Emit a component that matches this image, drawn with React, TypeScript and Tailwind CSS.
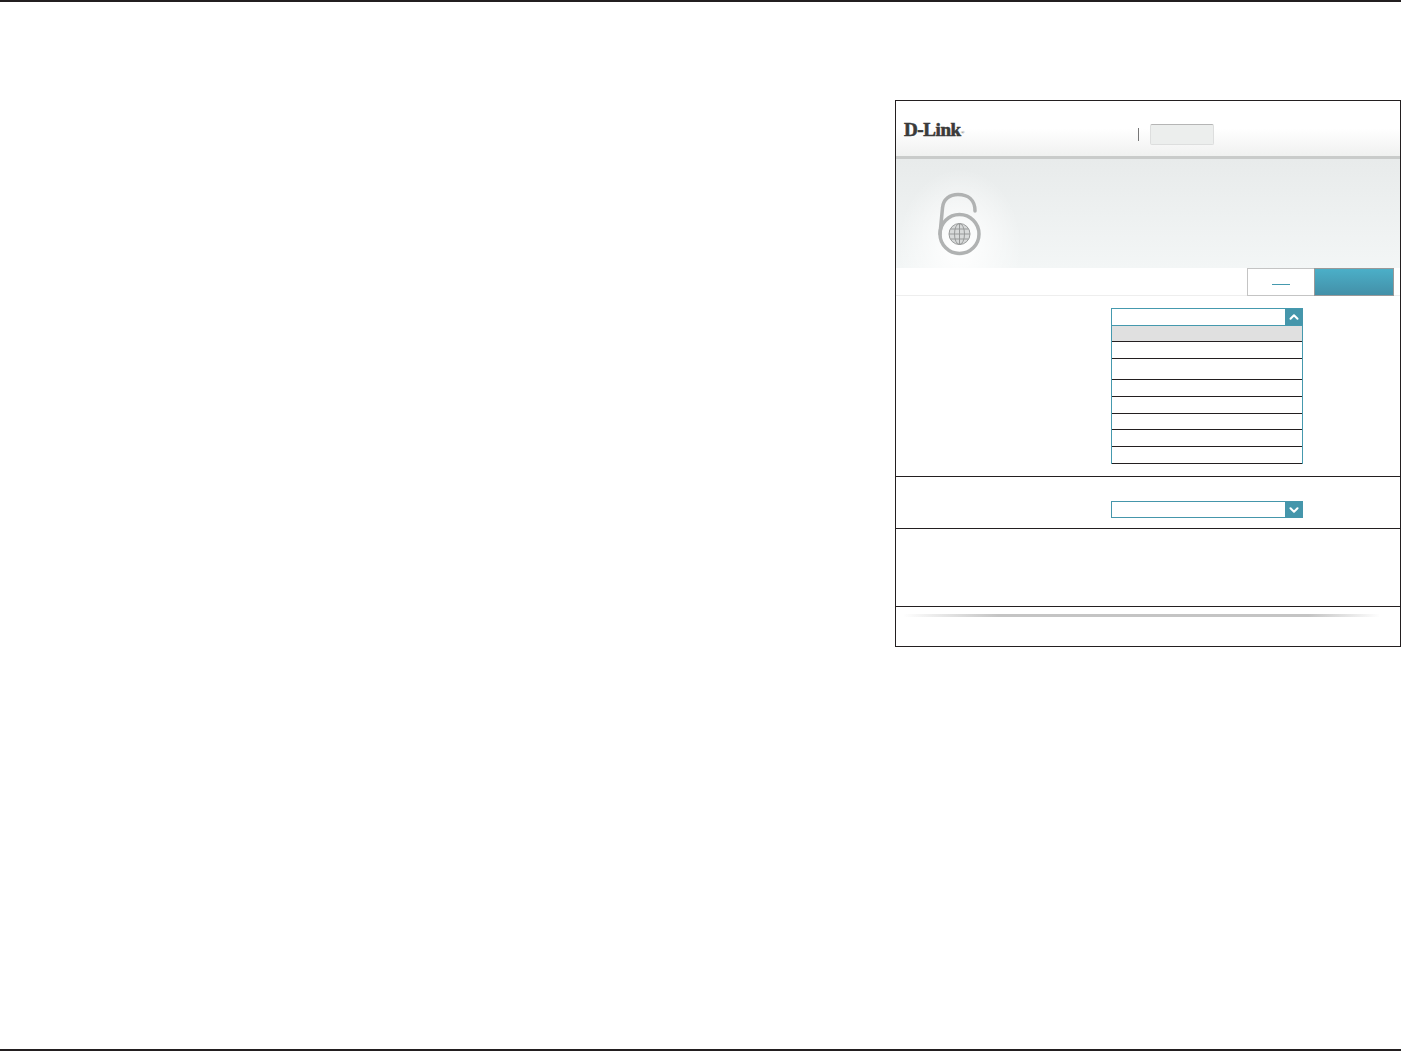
import { ChevronDown, ChevronUp } from "lucide-react";

const rows = [
  "h-[17px]",
  "h-[21px]",
  "h-[17px]",
  "h-[17px]",
  "h-[16px]",
  "h-[17px]",
  "h-[17px]",
];

function LockIcon() {
  return (
    <svg width="70" height="80" viewBox="0 0 70 80" fill="none">
      <circle cx="34.5" cy="49" r="19.5" stroke="#b0b2b2" strokeWidth="3.5" />
      <path
        d="M15 49 L17.5 23 C18 14 25 9.5 33 9.5 C43 9.5 50 15 50 26"
        stroke="#b0b2b2"
        strokeWidth="3.5"
        strokeLinecap="round"
      />
      <g stroke="#989a9a" strokeWidth="1">
        <circle cx="34.5" cy="49" r="10.5" fill="#d8dada" />
        <ellipse cx="34.5" cy="49" rx="5" ry="10.5" />
        <path d="M34.5 38.5 V59.5 M24 49 H45 M25.5 44 H43.5 M25.5 54 H43.5" />
      </g>
    </svg>
  );
}

export default function App() {
  return (
    <div className="h-[1051px] w-[1401px] bg-white border-t-2 border-b-2 border-[#231f20] flex justify-end items-start pt-[98px]">
      <div className="w-[506px] border border-[#231f20] bg-white">
        {/* header */}
        <div className="h-[55px] flex items-start pl-[8px] bg-gradient-to-b from-white from-50% to-[#f0f1f0]">
          <div className="w-[234px] mt-[18px] font-['Liberation_Serif',serif] font-bold text-[19px] leading-[22px] tracking-[-0.4px] text-[#3a3a3a] [-webkit-text-stroke:0.6px_#3a3a3a]">
            D-Link
            <sup className="text-[5px] font-normal tracking-normal [-webkit-text-stroke:0px]">®</sup>
          </div>
          <div className="w-px h-[13px] mt-[27px] bg-[#777]" />
          <div className="w-[64px] h-[21px] ml-[11px] mt-[23px] rounded-[2px] bg-[#eceeed] border border-[#dddede] border-t-[#b5b5b5]" />
        </div>
        <div className="h-[3px] bg-[#c9cbca]" />

        {/* hero */}
        <div className="h-[109px] bg-gradient-to-b from-[#e8ebeb] to-[#f3f6f6]">
          <div className="h-full pl-[29px] pt-[26px] bg-[radial-gradient(ellipse_62px_78px_at_64px_88px,#ffffff_0%,#ffffff00_100%)]">
            <LockIcon />
          </div>
        </div>

        {/* toolbar */}
        <div className="h-[28px] flex justify-end pr-[6px] border-b border-[#eeeeee]">
          <div className="w-[67px] h-[28px] flex justify-center items-end pb-[10px] border border-[#c4c4c4] border-r-0 bg-white">
            <div className="w-[18px] h-px bg-[#4599ae]" />
          </div>
          <div className="w-[80px] h-[28px] border border-[#999999] bg-gradient-to-b from-[#4bafc8] to-[#4390a8]" />
        </div>

        {/* open select */}
        <div className="pl-[215px] pt-[12px] pb-[12px] border-b border-[#231f20]">
          <div className="w-[192px]">
            <div className="h-[18px] flex justify-end border border-r-0 border-[#4599ae] bg-white">
              <div className="w-[18px] flex items-center justify-center bg-[#4596ab] text-white">
                <ChevronUp size={14} strokeWidth={3.5} />
              </div>
            </div>
            <div className="border-x border-[#4599ae]">
              <div className="h-[16px] bg-[#e0e0e0] border-b border-[#231f20]" />
              {rows.map((h, i) => (
                <div key={i} className={h + " bg-white border-b border-[#231f20]"} />
              ))}
            </div>
          </div>
        </div>

        {/* closed select */}
        <div className="pl-[215px] pt-[24px] pb-[10px] border-b border-[#231f20]">
          <div className="w-[192px] h-[17px] flex justify-end border border-r-0 border-[#4596ab] bg-white">
            <div className="w-[18px] flex items-center justify-center bg-[#4596ab] text-white">
              <ChevronDown size={14} strokeWidth={3.5} />
            </div>
          </div>
        </div>

        <div className="h-[78px] border-b border-[#231f20]" />

        {/* footer */}
        <div className="h-[39px] pt-[7px] pl-[7px]">
          <div className="w-[477px] h-[3px] bg-[linear-gradient(to_right,#c4c4c400_0%,#c4c4c4_20%,#c4c4c4_85%,#c4c4c400_100%)]" />
        </div>
      </div>
    </div>
  );
}
